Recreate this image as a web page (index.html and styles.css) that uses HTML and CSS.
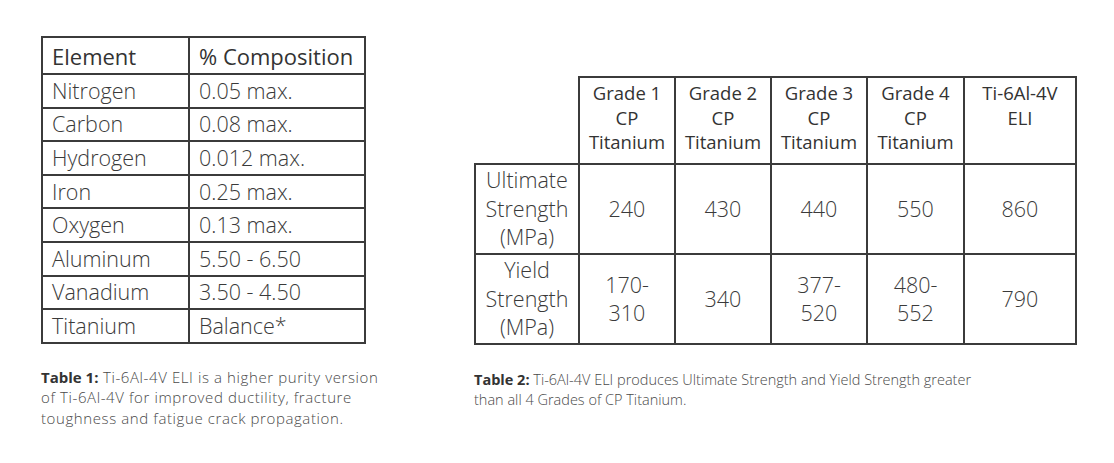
FILE: index.html
```html
<!DOCTYPE html>
<html lang="en">
<head>
<meta charset="utf-8">
<title>Ti-6Al-4V ELI tables</title>
<link rel="stylesheet" href="styles.css">
</head>
<body>
<main class="page">
  <figure class="fig fig-one">
    <table class="tbl comp">
      <colgroup><col class="c-el"><col class="c-pc"></colgroup>
      <thead>
        <tr class="head-row"><th>Element</th><th>% Composition</th></tr>
      </thead>
      <tbody>
        <tr><td>Nitrogen</td><td>0.05 max.</td></tr>
        <tr><td>Carbon</td><td>0.08 max.</td></tr>
        <tr><td>Hydrogen</td><td>0.012 max.</td></tr>
        <tr><td>Iron</td><td>0.25 max.</td></tr>
        <tr><td>Oxygen</td><td>0.13 max.</td></tr>
        <tr><td>Aluminum</td><td>5.50 - 6.50</td></tr>
        <tr><td>Vanadium</td><td>3.50 - 4.50</td></tr>
        <tr><td>Titanium</td><td>Balance*</td></tr>
      </tbody>
    </table>
    <figcaption class="cap"><b>Table 1:</b> Ti-6Al-4V ELI is a higher purity version<br>of Ti-6Al-4V for improved ductility, fracture<br>toughness and fatigue crack propagation.</figcaption>
  </figure>

  <figure class="fig fig-two">
    <table class="tbl grades">
      <colgroup>
        <col class="g-lab"><col class="g-c"><col class="g-c"><col class="g-c"><col class="g-c4"><col class="g-ti">
      </colgroup>
      <thead>
        <tr class="g-head">
          <th class="blank"></th>
          <th>Grade 1<br>CP<br>Titanium</th>
          <th>Grade 2<br>CP<br>Titanium</th>
          <th>Grade 3<br>CP<br>Titanium</th>
          <th>Grade 4<br>CP<br>Titanium</th>
          <th>Ti-6Al-4V<br>ELI</th>
        </tr>
      </thead>
      <tbody>
        <tr class="g-row">
          <th class="lab">Ultimate<br>Strength<br>(MPa)</th>
          <td>240</td><td>430</td><td>440</td><td>550</td><td>860</td>
        </tr>
        <tr class="g-row">
          <th class="lab">Yield<br>Strength<br>(MPa)</th>
          <td>170-<br>310</td><td>340</td><td>377-<br>520</td><td>480-<br>552</td><td>790</td>
        </tr>
      </tbody>
    </table>
    <figcaption class="cap"><b>Table 2:</b> Ti-6Al-4V ELI produces Ultimate Strength and Yield Strength greater<br>than all 4 Grades of CP Titanium.</figcaption>
  </figure>
</main>
</body>
</html>
```

FILE: styles.css
```css
html, body {
  margin: 0;
  padding: 0;
  background: #ffffff;
}

body {
  font-family: "Open Sans", "Lato", "Liberation Sans", sans-serif;
  color: #3d3d3d;
}

.page {
  display: flex;
  align-items: flex-start;
  padding: 36px 0 0 41px;
  gap: 108px;
}

.fig {
  margin: 0;
}

.fig-one {
  flex: 0 0 325px;
  width: 325px;
  min-width: 0;
}

.fig-two {
  flex: 0 0 auto;
  margin-top: 40px;
}

.tbl {
  border-collapse: collapse;
  table-layout: fixed;
}

.tbl th,
.tbl td {
  border: 2px solid #3b3b3b;
  padding: 0;
}

/* Table 1 */
.comp {
  width: 323px;
}
.c-el { width: 147px; }
.c-pc { width: 176px; }

.comp th,
.comp td {
  text-align: left;
  padding-left: 9px;
  line-height: 24px;
  vertical-align: middle;
  white-space: nowrap;
}

.comp th {
  font-size: 22px;
  font-weight: 400;
  color: #333333;
}

.comp td {
  font-size: 21.5px;
  font-weight: 300;
  color: #3a3a3a;
}

.comp .head-row { height: 37px; }
.comp tbody tr { height: 33.6px; }

/* Table 2 */
.grades {
  width: 601px;
}
.g-lab { width: 104px; }
.g-c { width: 96px; }
.g-c4 { width: 97px; }
.g-ti { width: 112px; }

.grades thead th {
  font-weight: 400;
  font-size: 18.5px;
  line-height: 24.5px;
  text-align: center;
  vertical-align: top;
  padding-top: 3px;
  height: 82px;
  color: #333333;
  white-space: nowrap;
}

.grades thead th.blank {
  border-top: none;
  border-left: none;
}

.grades .g-row {
  height: 90px;
}

.grades tbody th,
.grades tbody td {
  font-weight: 300;
  font-size: 21.5px;
  line-height: 28.5px;
  text-align: center;
  vertical-align: middle;
  color: #3a3a3a;
}

/* captions */
.cap {
  font-weight: 300;
  color: #4a4a4a;
  white-space: nowrap;
}

.fig-one .cap {
  margin-top: 23px;
  font-size: 15px;
  line-height: 20.5px;
  letter-spacing: 0.6px;
}

.fig-two .cap {
  margin-top: 25px;
  font-size: 14.5px;
  line-height: 19.8px;
}

.cap b {
  font-weight: 700;
  color: #333333;
  letter-spacing: 0;
}
```
